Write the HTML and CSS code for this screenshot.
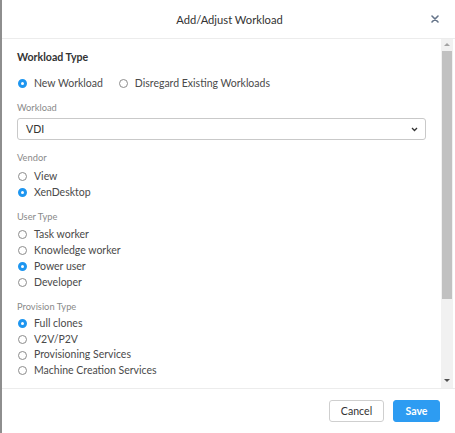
FILE: index.html
```html
<!DOCTYPE html>
<html>
<head>
<meta charset="utf-8">
<link rel="stylesheet" href="styles.css">
</head>
<body>
<div class="modal">
  <div class="header">
    <span></span>
    <div class="title">Add/Adjust Workload</div>
    <button class="close" aria-label="Close">
      <svg width="8" height="8" viewBox="0 0 8 8"><path d="M1 1L7 7M7 1L1 7" stroke="#66758a" stroke-width="1.6" stroke-linecap="round"/></svg>
    </button>
  </div>
  <div class="body">
    <div class="content">
      <div class="heading">Workload Type</div>
      <div class="radio-row">
        <label class="opt"><span class="radio checked"></span>New Workload</label>
        <label class="opt"><span class="radio"></span>Disregard Existing Workloads</label>
      </div>
      <div class="label first">Workload</div>
      <div class="select">
        <span>VDI</span>
        <svg width="7" height="5" viewBox="0 0 7 5"><path d="M1 1L3.5 3.5L6 1" fill="none" stroke="#333" stroke-width="1.3"/></svg>
      </div>
      <div class="label vendor">Vendor</div>
      <div class="list vendor-list">
        <label class="opt"><span class="radio"></span>View</label>
        <label class="opt"><span class="radio checked"></span>XenDesktop</label>
      </div>
      <div class="label">User Type</div>
      <div class="list">
        <label class="opt"><span class="radio"></span>Task worker</label>
        <label class="opt"><span class="radio"></span>Knowledge worker</label>
        <label class="opt"><span class="radio checked"></span>Power user</label>
        <label class="opt"><span class="radio"></span>Developer</label>
      </div>
      <div class="label">Provision Type</div>
      <div class="list tight">
        <label class="opt"><span class="radio checked"></span>Full clones</label>
        <label class="opt"><span class="radio"></span>V2V/P2V</label>
        <label class="opt"><span class="radio"></span>Provisioning Services</label>
        <label class="opt"><span class="radio"></span>Machine Creation Services</label>
      </div>
    </div>
    <div class="scrollbar">
      <div class="arrow up"></div>
      <div class="track"><div class="thumb"></div></div>
      <div class="arrow down"></div>
    </div>
  </div>
  <div class="footer">
    <button class="btn cancel">Cancel</button>
    <button class="btn save">Save</button>
  </div>
</div>
</body>
</html>
```

FILE: styles.css
```css
* { box-sizing: border-box; }
html, body { margin: 0; padding: 0; background: #fff; }
body {
  font-family: Lato, "Open Sans", sans-serif;
  color: #3d3d3d;
  width: 455px;
  height: 433px;
  overflow: hidden;
}
.modal {
  height: 433px;
  display: flex;
  flex-direction: column;
  border-left: 2px solid #8e8e8e;
}
.header {
  height: 39px;
  flex: none;
  display: grid;
  grid-template-columns: 1fr auto 1fr;
  align-items: center;
  border-bottom: 1px solid #ececec;
}
.title {
  font-size: 11.2px;
  color: #333;
  padding-left: 2px;
}
.close {
  justify-self: end;
  margin-right: 15px;
  border: 0;
  background: none;
  padding: 0;
  width: 10px;
  height: 10px;
  display: flex;
  align-items: center;
  justify-content: center;
}
.body {
  flex: 1;
  display: flex;
  min-height: 0;
  border-bottom: 1px solid #ececec;
}
.content {
  flex: 1;
  padding: 11px 15px 0 15px;
  display: flex;
  flex-direction: column;
}
.heading {
  font-size: 10.6px;
  font-weight: 700;
  line-height: 14px;
  color: #333;
}
.radio-row {
  display: flex;
  gap: 15px;
  margin-top: 12px;
}
.opt {
  display: flex;
  align-items: center;
  font-size: 10.5px;
  line-height: 16px;
  color: #4a4a4a;
}
.radio-row .opt { line-height: 14px; }
.tight .opt { line-height: 15.7px; }
.radio {
  width: 9px;
  height: 9px;
  border-radius: 50%;
  border: 1px solid #8c8c8c;
  margin: 0 7px 0 1px;
  flex: none;
  background: #fff;
}
.radio.checked {
  border: 3px solid #1e96f0;
  background: #fff;
}
.label {
  font-size: 9.3px;
  line-height: 12px;
  color: #8a8a8a;
  margin-top: 11px;
}
.label.first, .label.vendor { margin-top: 12px; }
.select {
  margin-top: 4px;
  height: 22px;
  border: 1px solid #c9c9c9;
  border-radius: 3px;
  display: flex;
  align-items: center;
  justify-content: space-between;
  padding: 0 7px 0 8px;
  font-size: 10.6px;
  color: #333;
}
.list {
  display: flex;
  flex-direction: column;
  margin-top: 3px;
}
.list.vendor-list { margin-top: 4px; }
.scrollbar {
  width: 12px;
  margin-right: 2px;
  flex: none;
  display: flex;
  flex-direction: column;
  background: #f1f1f1;
  padding-bottom: 2px;
}
.arrow {
  height: 12px;
  flex: none;
  position: relative;
}
.arrow::after {
  content: "";
  position: absolute;
  left: 3px;
  border-left: 3px solid transparent;
  border-right: 3px solid transparent;
}
.arrow.up::after { top: 4px; border-bottom: 3px solid #a3a3a3; }
.arrow.down::after { top: 5px; border-top: 3px solid #505050; }
.track { flex: 1; }
.thumb {
  height: 248px;
  background: #c1c1c1;
  margin: 0 1px;
}
.footer {
  height: 44px;
  flex: none;
  display: flex;
  justify-content: flex-end;
  align-items: flex-start;
  gap: 9px;
  padding: 11px 15px 0 0;
}
.btn {
  height: 22px;
  border-radius: 3px;
  font-family: Lato, "Open Sans", sans-serif;
  font-size: 10.6px;
  padding: 0;
}
.cancel {
  width: 55px;
  background: #fff;
  border: 1px solid #cfcfcf;
  color: #333;
}
.save {
  width: 47px;
  background: #2d9cf2;
  border: 1px solid #2d9cf2;
  color: #fff;
  font-weight: 700;
}
```
